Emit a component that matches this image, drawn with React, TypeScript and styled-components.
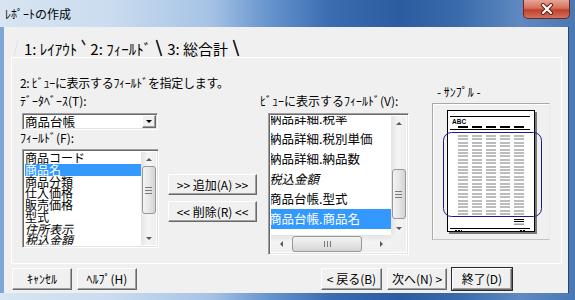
import styled, { createGlobalStyle } from 'styled-components';

const GlobalStyle = createGlobalStyle`
  html, body {
    margin: 0;
    padding: 0;
    width: 575px;
    height: 300px;
    overflow: hidden;
    background: #f0f0f0;
  }
  body {
    font-family: "Noto Sans CJK JP", "Noto Sans", sans-serif;
    font-size: 12px;
    color: #000;
  }
`;

const Window = styled.div`
  display: flex;
  flex-direction: column;
  width: 575px;
  height: 300px;
  background: linear-gradient(90deg, #d8e5f2 0, #cadcef 110px, #a6c3e5 210px, #6593cc 270px,
    #3a6db0 330px, #2a5c9f 400px, #3a6cac 460px, #5f89c0 520px, #4a78b3 575px);
`;

const TitleBar = styled.div`
  flex: none;
  display: flex;
  justify-content: space-between;
  align-items: flex-start;
  height: 27px;
  padding-left: 5px;
`;

const Title = styled.span`
  margin-top: 6px;
  font-size: 12px;
  line-height: 15px;
`;

const CloseButton = styled.div`
  display: flex;
  align-items: center;
  justify-content: center;
  width: 47px;
  height: 19px;
  margin-right: 5px;
  box-sizing: border-box;
  border: 1px solid #6e2a1e;
  border-top: none;
  border-radius: 0 0 5px 5px;
  background: linear-gradient(#e8a597, #d6705c 45%, #c2402a 55%, #d0735f);
`;

const Client = styled.div`
  flex: 1;
  display: flex;
  flex-direction: column;
  margin: 0 6px 7px 0;
  background: #f0f0f0;
  border-left: 4px solid #7ea6d5;
  border-right: 1px solid #26456f;
`;

const TabStrip = styled.div`
  flex: none;
  display: flex;
  align-items: flex-end;
  height: 30px;
  padding-left: 9px;
`;

const TabLabel = styled.span`
  font-size: 15px;
  line-height: 17px;
  white-space: nowrap;
  padding: 0 4px 0 3px;
`;

const TabPanel = styled.div`
  flex: none;
  height: 207px;
  margin: 0 6px 0 7px;
  box-sizing: border-box;
  border: 1px solid #fff;
  padding: 17px 0 0 8px;
`;

const PanelGrid = styled.div`
  display: grid;
  grid-template-columns: 148px 92px 172px 118px;
  grid-template-rows: 16px auto;
`;

const Instruction = styled.div`
  grid-column: 1 / 4;
  line-height: 16px;
  white-space: nowrap;
  letter-spacing: -0.3px;
`;

const Column = styled.div<{ $top?: number }>`
  display: flex;
  flex-direction: column;
  align-items: flex-start;
  padding-top: ${({ $top }) => $top ?? 0}px;
`;

const SampleColumn = styled(Column)`
  grid-column: 4;
  grid-row: 1 / 3;
`;

const Label = styled.div`
  line-height: 16px;
  white-space: nowrap;
`;

const Sunken = styled.div`
  box-sizing: border-box;
  background: #fff;
  border: 1px solid;
  border-color: #a0a0a0 #fff #fff #a0a0a0;
  box-shadow: inset 1px 1px #696969, inset -1px -1px #e3e3e3;
`;

const ComboBox = styled(Sunken)`
  display: flex;
  align-items: center;
  justify-content: space-between;
  width: 136px;
  height: 17px;
  margin: 4px 0 0 2px;
  padding: 0 1px 0 2px;
  font-size: 12.5px;
  line-height: 13px;
`;

const DropButton = styled.div`
  display: flex;
  align-items: center;
  justify-content: center;
  width: 14px;
  height: 13px;
  box-sizing: border-box;
  background: #f0f0f0;
  border: 1px solid;
  border-color: #fff #696969 #696969 #fff;
  box-shadow: inset -1px -1px #a0a0a0;
`;

const Arrow = styled.span<{ $dir: 'up' | 'down' | 'left' | 'right'; $size?: number; $color?: string }>`
  width: 0;
  height: 0;
  border: ${({ $size }) => $size ?? 3}px solid transparent;
  ${({ $dir, $size, $color }) => {
    const s = $size ?? 3;
    const c = $color ?? '#5a5a5a';
    if ($dir === 'up') return `border-bottom: ${s}px solid ${c}; border-top-width: 0;`;
    if ($dir === 'down') return `border-top: ${s}px solid ${c}; border-bottom-width: 0;`;
    if ($dir === 'left') return `border-right: ${s}px solid ${c}; border-left-width: 0;`;
    return `border-left: ${s}px solid ${c}; border-right-width: 0;`;
  }}
`;

const ListBox = styled(Sunken)<{ $w: number; $h: number; $left: number; $top: number }>`
  display: grid;
  grid-template-columns: 1fr 15px;
  width: ${({ $w }) => $w}px;
  height: ${({ $h }) => $h}px;
  margin: ${({ $top }) => $top}px 0 0 ${({ $left }) => $left}px;
  padding: 2px;
`;

const WideListBox = styled(ListBox)`
  grid-template-rows: 1fr 17px;
`;

const ListViewport = styled.div`
  overflow: hidden;
  min-height: 0;
`;

const ListItems = styled.div<{ $shiftY?: number; $shiftX?: number }>`
  display: flex;
  flex-direction: column;
  margin-top: ${({ $shiftY }) => $shiftY ?? 0}px;
  margin-left: ${({ $shiftX }) => $shiftX ?? 0}px;
`;

const Item = styled.div<{ $selected?: boolean; $italic?: boolean; $row: number; $size?: number }>`
  height: ${({ $row }) => $row}px;
  line-height: ${({ $row }) => $row}px;
  font-size: ${({ $size }) => $size ?? 12.5}px;
  white-space: nowrap;
  font-style: ${({ $italic }) => ($italic ? 'italic' : 'normal')};
  background: ${({ $selected }) => ($selected ? '#3399ff' : 'transparent')};
  color: ${({ $selected }) => ($selected ? '#fff' : '#000')};
`;

const VScroll = styled.div`
  display: flex;
  flex-direction: column;
  min-height: 0;
  background: linear-gradient(90deg, #e4e4e4, #f4f4f4 45%, #eeeeee);
`;

const HScroll = styled.div`
  display: flex;
  background: linear-gradient(#e4e4e4, #f4f4f4 45%, #eeeeee);
`;

const ScrollCorner = styled.div`
  background: #f0f0f0;
`;

const VArrowCell = styled.div`
  flex: none;
  display: flex;
  align-items: center;
  justify-content: center;
  width: 15px;
  height: 14px;
`;

const HArrowCell = styled.div`
  flex: none;
  display: flex;
  align-items: center;
  justify-content: center;
  width: 20px;
  height: 17px;
`;

const VTrack = styled.div`
  flex: 1;
  display: flex;
  flex-direction: column;
  align-items: center;
  min-height: 0;
`;

const HTrack = styled.div`
  flex: 1;
  display: flex;
  align-items: center;
`;

const Thumb = styled.div`
  display: flex;
  flex-direction: column;
  align-items: center;
  justify-content: center;
  gap: 2px;
  box-sizing: border-box;
  border: 1px solid #979797;
  border-radius: 3px;
`;

const VThumb = styled(Thumb)<{ $offset: number; $length: number }>`
  width: 14px;
  height: ${({ $length }) => $length}px;
  margin-top: ${({ $offset }) => $offset}px;
  background: linear-gradient(90deg, #f3f3f3, #e6e6e6 50%, #d4d4d4);
`;

const HThumb = styled(Thumb)<{ $offset: number; $length: number }>`
  flex-direction: row;
  width: ${({ $length }) => $length}px;
  height: 16px;
  margin-left: ${({ $offset }) => $offset}px;
  background: linear-gradient(#f3f3f3, #e6e6e6 50%, #d4d4d4);
`;

const Grip = styled.span<{ $vertical?: boolean }>`
  display: block;
  width: ${({ $vertical }) => ($vertical ? '1px' : '7px')};
  height: ${({ $vertical }) => ($vertical ? '6px' : '1px')};
  background: #7a7a7a;
`;

const ButtonStack = styled.div`
  display: flex;
  flex-direction: column;
  gap: 6px;
  padding-top: 83px;
`;

const Button = styled.button<{ $width: number; $height?: number; $default?: boolean }>`
  width: ${({ $width }) => $width}px;
  height: ${({ $height }) => $height ?? 21}px;
  padding: 0;
  box-sizing: border-box;
  font-family: inherit;
  font-size: 12px;
  line-height: 14px;
  color: #000;
  white-space: nowrap;
  background: #f0f0f0;
  border: 1px solid;
  border-color: #fff #696969 #696969 #fff;
  box-shadow: ${({ $default }) =>
    $default ? '0 0 0 1px #2b2b2b, inset -1px -1px #a0a0a0' : 'inset -1px -1px #a0a0a0'};
`;

const SampleFrame = styled.div`
  width: 118px;
  height: 137px;
  margin-top: 3px;
  box-sizing: border-box;
  border: 1px solid;
  border-color: #a8a8a8 #e8e8e8 #c4c4c4 #a8a8a8;
  box-shadow: inset 1px 1px #fff;
`;

const SampleLabel = styled.div`
  line-height: 16px;
  margin-left: 5px;
  white-space: nowrap;
`;

const ButtonRow = styled.div`
  flex: none;
  display: flex;
  gap: 5px;
  margin-top: 4px;
  padding-left: 8px;
`;

const Spacer = styled.div`
  flex: 1;
`;

const ButtonGroup = styled.div`
  display: flex;
  gap: 5px;
  margin-right: 56px;
`;

const fieldItems = [
  { text: '商品コード' },
  { text: '商品名', selected: true },
  { text: '商品分類' },
  { text: '仕入価格' },
  { text: '販売価格' },
  { text: '型式' },
  { text: '住所表示', italic: true },
  { text: '税込金額', italic: true },
];

const viewItems = [
  { text: '納品詳細.税率' },
  { text: '納品詳細.税別単価' },
  { text: '納品詳細.納品数' },
  { text: '税込金額', italic: true },
  { text: '商品台帳.型式' },
  { text: '商品台帳.商品名', selected: true },
  { text: '' },
];

const TabMark = ({ kind }: { kind: 'lead' | 'tick' | 'slash' }) => {
  if (kind === 'lead') {
    return (
      <svg width="8" height="18" viewBox="0 0 8 18">
        <line x1="1" y1="17" x2="5" y2="1" stroke="#e0e0e0" strokeWidth="1" />
      </svg>
    );
  }
  if (kind === 'tick') {
    return (
      <svg width="6" height="18" viewBox="0 0 6 18">
        <line x1="1" y1="1" x2="4" y2="6" stroke="#333" strokeWidth="1.6" />
      </svg>
    );
  }
  return (
    <svg width="9" height="18" viewBox="0 0 9 18">
      <line x1="1.5" y1="1" x2="6.5" y2="17" stroke="#222" strokeWidth="1.8" />
    </svg>
  );
};

const VScrollBar = ({ offset, length }: { offset: number; length: number }) => (
  <VScroll>
    <VArrowCell>
      <Arrow $dir="up" />
    </VArrowCell>
    <VTrack>
      <VThumb $offset={offset} $length={length}>
        <Grip />
        <Grip />
        <Grip />
      </VThumb>
    </VTrack>
    <VArrowCell>
      <Arrow $dir="down" />
    </VArrowCell>
  </VScroll>
);

const SamplePage = () => {
  const cols = [25, 39, 53, 67, 81];
  const rows = Array.from({ length: 24 }, (_, i) => 31 + Math.round(i * 3.4));
  return (
    <svg width="116" height="135" viewBox="0 0 116 135">
      <rect x="16" y="8" width="88" height="122" fill="#7a7a7a" />
      <rect x="14.5" y="6.5" width="87" height="121" fill="#fff" stroke="#000" />
      <line x1="17" y1="12.5" x2="97" y2="12.5" stroke="#000" />
      <text x="19" y="19.5" fontFamily="Liberation Sans, sans-serif" fontWeight="bold" fontSize="6.5">
        ABC
      </text>
      {cols.map((x) => (
        <rect key={`d${x}`} x={x} y="22" width="10" height="2" fill="#000" />
      ))}
      <line x1="17" y1="25.5" x2="97" y2="25.5" stroke="#000" />
      {rows.map((y) =>
        cols.map((x) => <rect key={`${x}-${y}`} x={x} y={y} width="10" height="2" fill="#bcbcbc" />),
      )}
      <rect x="10.5" y="28.5" width="98" height="84" rx="8" fill="none" stroke="#1c1c88" />
      <line x1="81" y1="115.5" x2="91" y2="115.5" stroke="#000" />
      <line x1="81" y1="117.5" x2="91" y2="117.5" stroke="#000" />
      <rect x="81" y="119.5" width="10" height="1.5" fill="#9a9a9a" />
      <line x1="17" y1="124.5" x2="97" y2="124.5" stroke="#000" strokeWidth="1.2" />
      <line x1="22" y1="126.5" x2="29" y2="126.5" stroke="#000" strokeDasharray="2 1" />
      <line x1="87" y1="126.5" x2="92" y2="126.5" stroke="#000" strokeDasharray="2 1" />
    </svg>
  );
};

const App = () => {
  return (
    <Window>
      <GlobalStyle />
      <TitleBar>
        <Title>ﾚﾎﾟｰﾄの作成</Title>
        <CloseButton>
          <svg width="14" height="12" viewBox="0 0 14 12">
            <path d="M3 2 L11 10 M11 2 L3 10" stroke="#5b1b12" strokeWidth="4" strokeLinecap="round" />
            <path d="M3 2 L11 10 M11 2 L3 10" stroke="#fff" strokeWidth="2.2" strokeLinecap="round" />
          </svg>
        </CloseButton>
      </TitleBar>
      <Client>
        <TabStrip>
          <TabMark kind="lead" />
          <TabLabel>1: ﾚｲｱｳﾄ</TabLabel>
          <TabMark kind="tick" />
          <TabLabel>2: ﾌｨｰﾙﾄﾞ</TabLabel>
          <TabMark kind="slash" />
          <TabLabel>3: 総合計</TabLabel>
          <TabMark kind="slash" />
        </TabStrip>
        <TabPanel>
          <PanelGrid>
            <Instruction>2: ﾋﾞｭｰに表示するﾌｨｰﾙﾄﾞを指定します。</Instruction>
            <Column $top={2}>
              <Label>ﾃﾞｰﾀﾍﾞｰｽ(T):</Label>
              <ComboBox>
                <span>商品台帳</span>
                <DropButton>
                  <Arrow $dir="down" $color="#000" />
                </DropButton>
              </ComboBox>
              <Label>ﾌｨｰﾙﾄﾞ(F):</Label>
              <ListBox $w={137} $h={99} $left={2} $top={3}>
                <ListViewport>
                  <ListItems>
                    {fieldItems.map((it) => (
                      <Item
                        key={it.text}
                        $row={11.75}
                        $size={12}
                        $selected={it.selected}
                        $italic={it.italic}
                      >
                        {it.text}
                      </Item>
                    ))}
                  </ListItems>
                </ListViewport>
                <VScrollBar offset={0} length={48} />
              </ListBox>
            </Column>
            <ButtonStack>
              <Button $width={89}>&gt;&gt; 追加(A) &gt;&gt;</Button>
              <Button $width={89}>&lt;&lt; 削除(R) &lt;&lt;</Button>
            </ButtonStack>
            <Column $top={2}>
              <Label>ﾋﾞｭｰに表示するﾌｨｰﾙﾄﾞ(V):</Label>
              <WideListBox $w={141} $h={142} $left={8} $top={4}>
                <ListViewport>
                  <ListItems $shiftY={-7} $shiftX={-2}>
                    {viewItems.map((it, i) => (
                      <Item key={i} $row={20} $selected={it.selected} $italic={it.italic}>
                        {it.text}
                      </Item>
                    ))}
                  </ListItems>
                </ListViewport>
                <VScrollBar offset={39} length={50} />
                <HScroll>
                  <HArrowCell>
                    <Arrow $dir="left" />
                  </HArrowCell>
                  <HTrack>
                    <HThumb $offset={1} $length={70}>
                      <Grip $vertical />
                      <Grip $vertical />
                      <Grip $vertical />
                    </HThumb>
                  </HTrack>
                  <HArrowCell>
                    <Arrow $dir="right" />
                  </HArrowCell>
                </HScroll>
                <ScrollCorner />
              </WideListBox>
            </Column>
            <SampleColumn $top={9}>
              <SampleLabel>- ｻﾝﾌﾟﾙ -</SampleLabel>
              <SampleFrame>
                <SamplePage />
              </SampleFrame>
            </SampleColumn>
          </PanelGrid>
        </TabPanel>
        <ButtonRow>
          <Button $width={60} $height={22}>ｷｬﾝｾﾙ</Button>
          <Button $width={60} $height={22}>ﾍﾙﾌﾟ(H)</Button>
          <Spacer />
          <ButtonGroup>
            <Button $width={61} $height={22}>&lt; 戻る(B)</Button>
            <Button $width={60} $height={22}>次へ(N) &gt;</Button>
            <Button $width={60} $height={22} $default>
              終了(D)
            </Button>
          </ButtonGroup>
        </ButtonRow>
      </Client>
    </Window>
  );
};

export default App;
